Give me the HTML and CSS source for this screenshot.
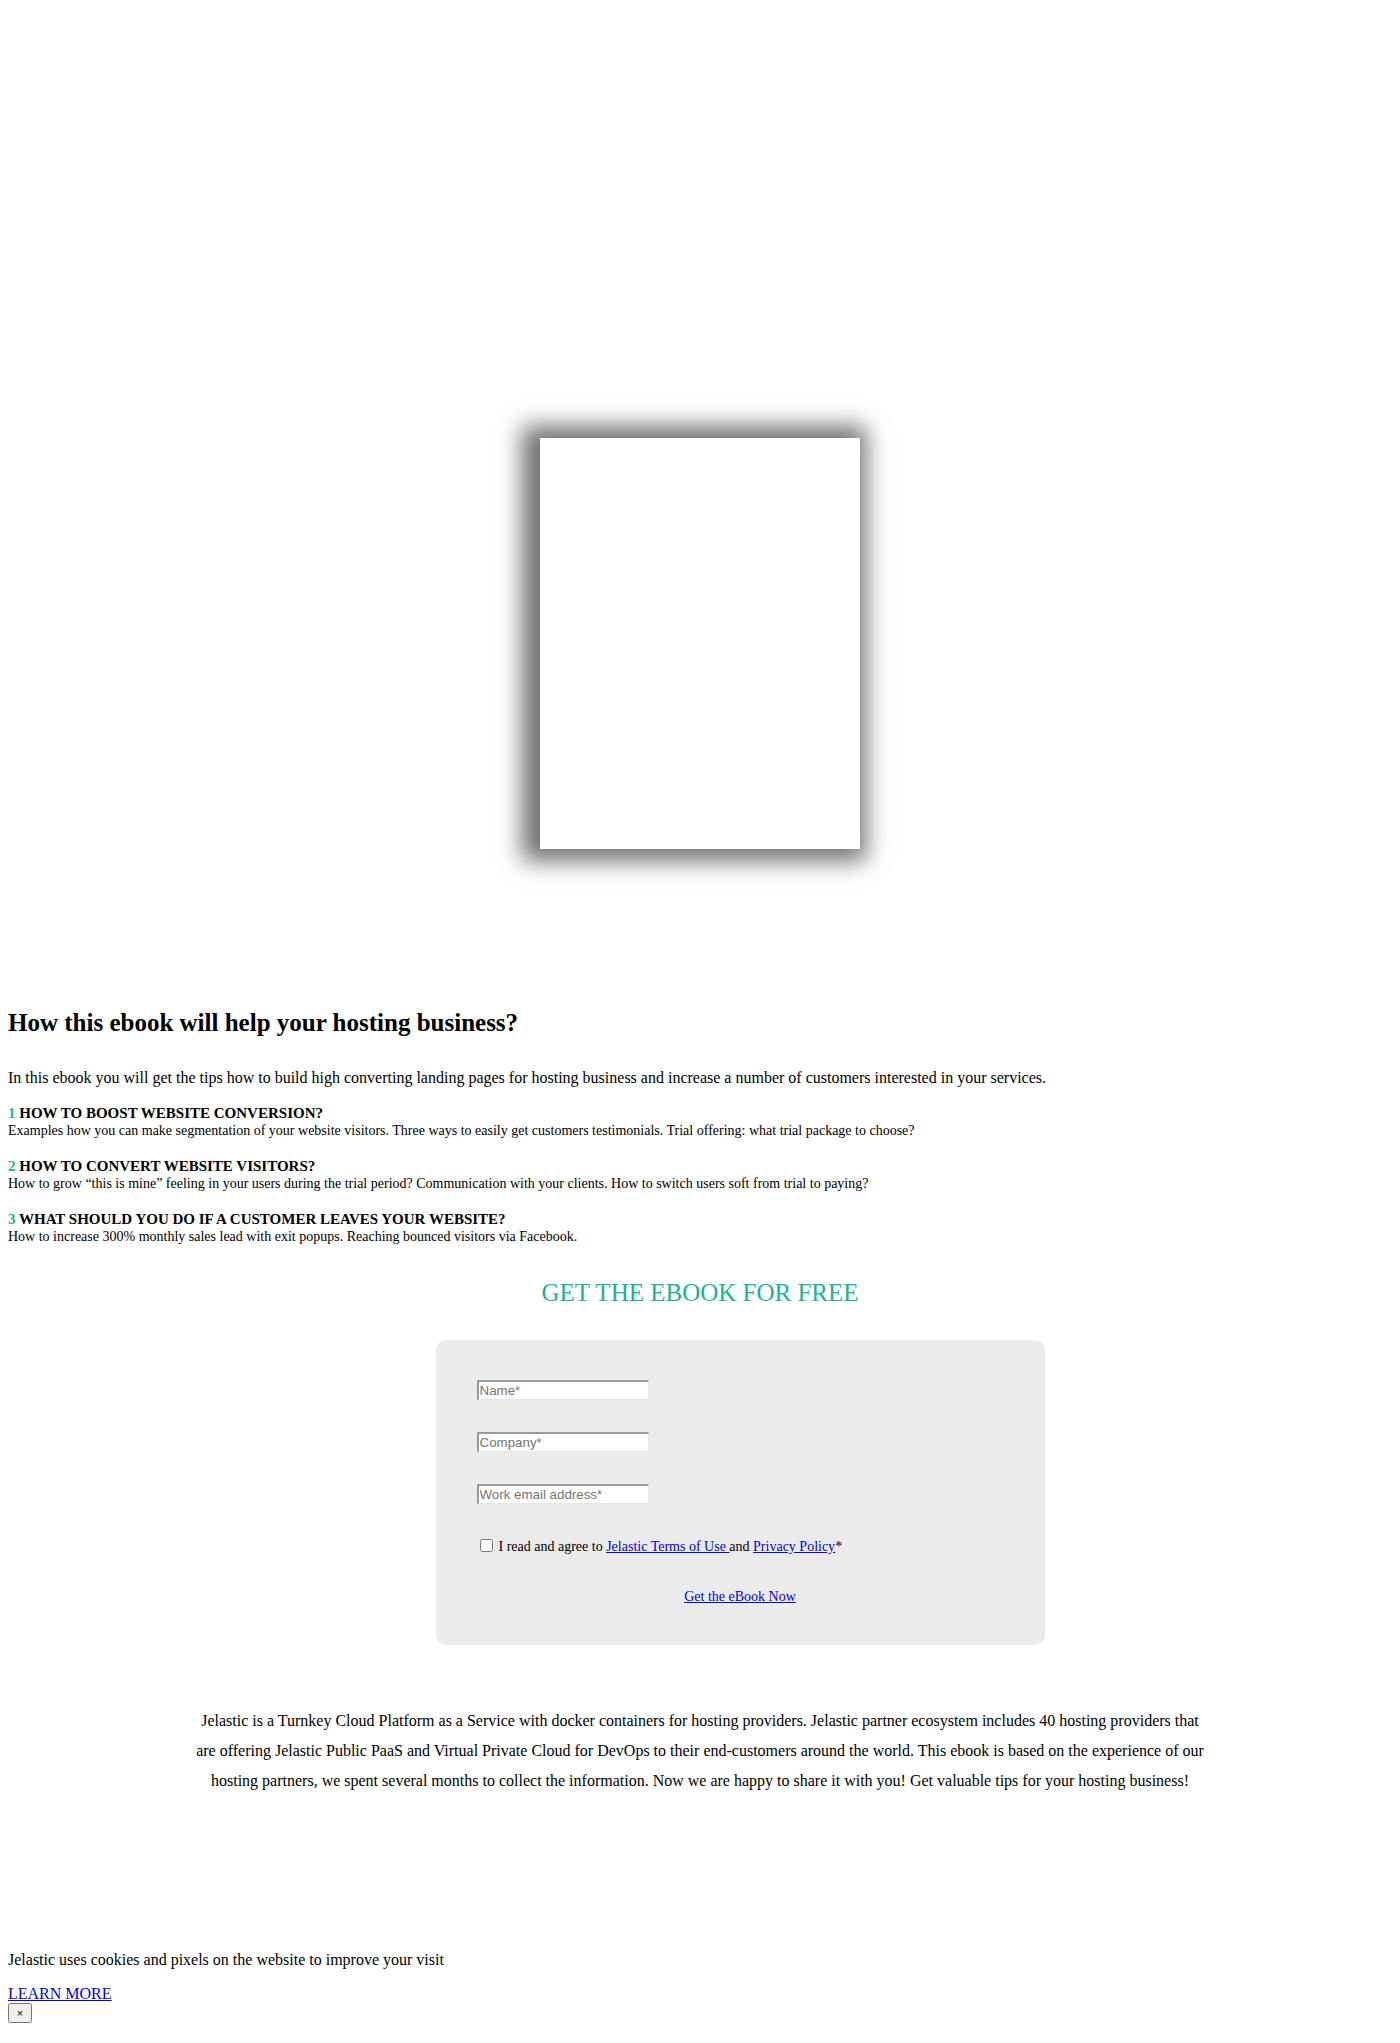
FILE: index.html
```html
<!DOCTYPE html>
<html>
<head>
<meta charset="utf-8">
<link rel="stylesheet" href="styles.css">
</head>
<body>
<section class="hero">
  <div class="book"></div>
</section>

<section class="benefits">
  <h2 class="benefits-title">How this ebook will help your hosting business?</h2>
  <p class="intro">In this ebook you will get the tips how to build high converting landing pages for hosting business and increase a number of customers interested in your services.</p>
  <div class="item">
    <div class="item-title"><span class="num">1</span> HOW TO BOOST WEBSITE CONVERSION?</div>
    <div class="item-desc">Examples how you can make segmentation of your website visitors. Three ways to easily get customers testimonials. Trial offering: what trial package to choose?</div>
  </div>
  <div class="item">
    <div class="item-title"><span class="num">2</span> HOW TO CONVERT WEBSITE VISITORS?</div>
    <div class="item-desc">How to grow “this is mine” feeling in your users during the trial period? Communication with your clients. How to switch users soft from trial to paying?</div>
  </div>
  <div class="item">
    <div class="item-title"><span class="num">3</span> WHAT SHOULD YOU DO IF A CUSTOMER LEAVES YOUR WEBSITE?</div>
    <div class="item-desc">How to increase 300% monthly sales lead with exit popups. Reaching bounced visitors via Facebook.</div>
  </div>
</section>

<section class="get">
  <h3 class="get-title">GET THE EBOOK FOR FREE</h3>
  <form class="form-box">
    <input class="field" type="text" placeholder="Name*">
    <input class="field" type="text" placeholder="Company*">
    <input class="field last" type="text" placeholder="Work email address*">
    <label class="agree"><input class="check" type="checkbox">I read and agree to <a href="#">Jelastic Terms of Use </a>and <a href="#">Privacy Policy</a>*</label>
    <div class="submit-row"><a href="#">Get the eBook Now</a></div>
  </form>
</section>

<section class="about">
  <p>Jelastic is a Turnkey Cloud Platform as a Service with docker containers for hosting providers. Jelastic partner ecosystem includes 40 hosting providers that are offering Jelastic Public PaaS and Virtual Private Cloud for DevOps to their end-customers around the world. This ebook is based on the experience of our hosting partners, we spent several months to collect the information. Now we are happy to share it with you! Get valuable tips for your hosting business!</p>
</section>

<section class="cookie">
  <p class="cookie-text">Jelastic uses cookies and pixels on the website to improve your visit</p>
  <a class="learn" href="#">LEARN MORE</a>
  <div class="close-row"><button class="close" type="button">×</button></div>
</section>
</body>
</html>
```
FILE: styles.css
```css
html, body {
  background: #fff;
}
body {
  margin: 8px;
  font-family: "Liberation Serif", "Times New Roman", serif;
  color: #000;
}
.hero {
  display: flex;
  justify-content: center;
  box-sizing: border-box;
  padding-top: 430px;
  height: 990px;
}
.book {
  width: 320px;
  height: 411px;
  background: #fff;
  box-shadow: -6px 0 22px 12px rgba(0, 0, 0, 0.56);
}
.benefits-title {
  font-size: 25px;
  font-weight: bold;
  margin: 10px 0 0;
  line-height: 29px;
}
.intro {
  font-size: 16px;
  margin: 32px 0 0;
  line-height: 18px;
}
.item {
  margin-top: 17px;
}
.item-title {
  font-size: 15px;
  font-weight: bold;
  line-height: 18px;
}
.num {
  color: #1ab394;
}
.item-desc {
  font-size: 14px;
  line-height: 18px;
}
.get {
  display: flex;
  flex-direction: column;
  align-items: center;
}
.get-title {
  font-size: 25px;
  font-weight: normal;
  color: #1ab394;
  margin: 32px 0 0;
  line-height: 30px;
}
.form-box {
  width: 609px;
  height: 305px;
  box-sizing: border-box;
  margin: 32px 0 0 80px;
  padding: 40px 40px 0 41px;
  background: #ebebeb;
  border-radius: 10px;
  display: flex;
  flex-direction: column;
  align-items: flex-start;
}
.field {
  width: 172px;
  height: 20px;
  box-sizing: border-box;
  border-style: solid;
  border-width: 2px 1px 1px 2px;
  border-color: #9a9a9a #e6e6e6 #e6e6e6 #9a9a9a;
  background: #fff;
  padding: 0 1px;
  font-family: "Liberation Sans", Arial, sans-serif;
  font-size: 13.33px;
  margin: 0 0 32px;
  outline: none;
}
.field.last {
  margin-bottom: 34px;
}
.field::placeholder {
  color: #757575;
}
.agree {
  font-size: 14px;
  line-height: 18px;
  display: flex;
  align-items: center;
  white-space: pre;
}
.agree a {
  color: #00e;
}
.check {
  margin: 0 6px 3px 3px;
  width: 13px;
  height: 13px;
}
.submit-row {
  align-self: stretch;
  text-align: center;
  font-size: 14px;
  line-height: 18px;
  margin-top: 32px;
  margin-left: -1px;
}
.submit-row a {
  color: #00e;
}
.about {
  display: flex;
  justify-content: center;
  margin-top: 61px;
}
.about p {
  width: 1020px;
  margin: 0;
  text-align: center;
  font-size: 16px;
  line-height: 30px;
}
.cookie {
  margin-top: 155px;
}
.cookie-text {
  font-size: 16px;
  margin: 0 0 16px;
  line-height: 18px;
}
.learn {
  display: inline-block;
  font-size: 16px;
  color: #00e;
  line-height: 18px;
}
.close-row {
  line-height: 0;
}
.close {
  font-size: 11px;
  width: 24px;
  height: 20px;
  padding: 0;
  margin: 0;
}
```
